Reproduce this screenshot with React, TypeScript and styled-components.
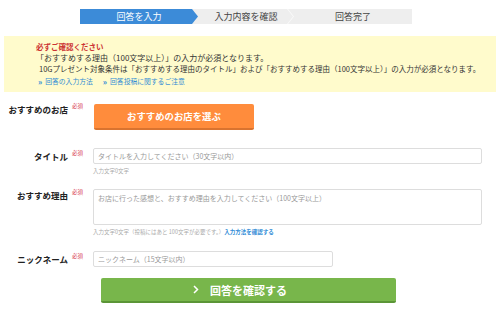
import React from "react";
import styled, { createGlobalStyle } from "styled-components";

const GlobalStyle = createGlobalStyle`
  html, body { margin: 0; padding: 0; background: #fff; }
  body {
    font-family: "Noto Sans CJK JP", "Noto Sans", sans-serif;
    color: #333;
    width: 500px;
    overflow: hidden;
  }
  * { box-sizing: border-box; }
`;

const Page = styled.div`
  width: 500px;
  padding-top: 9px;
`;

const StepBar = styled.div`
  margin-left: 80px;
  width: 332px;
  height: 15px;
  display: flex;
  background: #eeeeee;
`;

const Step = styled.div<{ $w: number; $active?: boolean; $sep?: boolean }>`
  position: relative;
  width: ${(p) => p.$w}px;
  height: 15px;
  display: flex;
  align-items: center;
  justify-content: center;
  font-size: 9px;
  line-height: 15px;
  color: ${(p) => (p.$active ? "#fff" : "#444")};
  background: ${(p) => (p.$active ? "#3c8bd8" : "transparent")};
  clip-path: ${(p) =>
    p.$active
      ? "polygon(0 0, calc(100% - 6px) 0, 100% 50%, calc(100% - 6px) 100%, 0 100%)"
      : "none"};
  &::after {
    content: "";
    display: ${(p) => (p.$sep ? "block" : "none")};
    position: absolute;
    right: 0;
    top: 0;
    width: 7px;
    height: 15px;
    background: #fafafa;
    clip-path: polygon(0 0, 1px 0, 7px 50%, 1px 100%, 0 100%, 6px 50%);
  }
`;

const Notice = styled.div`
  margin: 12px 4px 0;
  height: 56px;
  background: #fffbcc;
  padding: 5px 0 0 32px;
  font-size: 7.5px;
  line-height: 11px;
  color: #333;
`;

const NoticeTitle = styled.div`
  color: #cc3333;
  font-weight: bold;
`;

const NoticeLine = styled.div<{ $indent?: number; $size?: number }>`
  padding-left: ${(p) => p.$indent ?? 0}px;
  font-size: ${(p) => p.$size ?? 7.5}px;
  white-space: nowrap;
`;

const NoticeLinks = styled.div`
  display: flex;
  gap: 10px;
  margin-top: 2px;
  padding-left: 2px;
  font-size: 6.8px;
`;

const NoticeLink = styled.a`
  color: #2f8bd6;
  text-decoration: none;
  display: flex;
  align-items: center;
  &::before {
    content: "»";
    font-size: 8px;
    font-weight: bold;
    margin-right: 3px;
  }
`;

const Form = styled.div`
  padding: 12px 18px 0 0;
  display: flex;
  flex-direction: column;
`;

const Row = styled.div<{ $mt?: number }>`
  display: flex;
  gap: 8px;
  margin-top: ${(p) => p.$mt ?? 0}px;
`;

const LabelCell = styled.div<{ $pt: number }>`
  width: 85px;
  flex: none;
  padding-top: ${(p) => p.$pt}px;
  padding-right: 2px;
  display: flex;
  justify-content: flex-end;
  align-items: flex-start;
`;

const LabelText = styled.span`
  font-size: 8.5px;
  line-height: 10px;
  font-weight: bold;
  color: #222;
  white-space: nowrap;
`;

const Required = styled.span`
  font-size: 5.5px;
  line-height: 6px;
  color: #d6334c;
  margin-left: 4px;
  margin-top: -1px;
  white-space: nowrap;
`;

const Field = styled.div`
  flex: 1;
  display: flex;
  flex-direction: column;
`;

const OrangeButton = styled.button`
  width: 160px;
  height: 26px;
  margin-left: 1px;
  border: none;
  border-bottom: 2px solid #d9732f;
  border-radius: 2px;
  background: #ff8c3c;
  color: #fff;
  font-family: inherit;
  font-weight: bold;
  font-size: 9.4px;
  padding: 0;
  cursor: pointer;
`;

const TextInput = styled.input<{ $w?: number }>`
  width: ${(p) => (p.$w ? `${p.$w}px` : "100%")};
  height: 16px;
  border: 1px solid #dddddd;
  border-radius: 2px;
  padding: 0 4px;
  font-family: inherit;
  font-size: 7px;
  color: #333;
  outline: none;
  &::placeholder { color: #999; }
`;

const TextArea = styled.textarea`
  width: 100%;
  height: 36px;
  border: 1px solid #dddddd;
  border-radius: 2px;
  padding: 3px 4px;
  font-family: inherit;
  font-size: 7px;
  line-height: 10px;
  resize: none;
  outline: none;
  &::placeholder { color: #999; }
`;

const Counter = styled.div`
  margin-top: 3px;
  font-size: 5.5px;
  line-height: 8px;
  color: #aaa;
  white-space: nowrap;
`;

const CounterLink = styled.a`
  color: #2f8bd6;
  font-weight: bold;
  text-decoration: none;
`;

const SubmitWrap = styled.div`
  display: flex;
  margin-top: 11px;
  padding-left: 101px;
`;

const GreenButton = styled.button`
  width: 295px;
  height: 25px;
  border: none;
  border-bottom: 2px solid #5b9537;
  border-radius: 2px;
  background: #78b64b;
  color: #fff;
  font-family: inherit;
  font-weight: bold;
  font-size: 11px;
  display: flex;
  align-items: center;
  justify-content: center;
  gap: 11px;
  padding: 0 17px 0 0;
  cursor: pointer;
`;

const Chevron = () => (
  <svg width="6" height="9" viewBox="0 0 6 9" aria-hidden="true">
    <path d="M1 1 L4.5 4.5 L1 8" stroke="#fff" strokeWidth="1.5" fill="none" />
  </svg>
);

export default function App() {
  return (
    <Page>
      <GlobalStyle />
      <StepBar>
        <Step $w={118} $active>回答を入力</Step>
        <Step $w={96} $sep>入力内容を確認</Step>
        <Step $w={118}>回答完了</Step>
      </StepBar>

      <Notice>
        <NoticeTitle>必ずご確認ください</NoticeTitle>
        <NoticeLine $size={8}>「おすすめする理由（100文字以上）」の入力が必須となります。</NoticeLine>
        <NoticeLine $indent={3}>
          10Gプレゼント対象条件は「おすすめする理由のタイトル」および「おすすめする理由（100文字以上）」の入力が必須となります。
        </NoticeLine>
        <NoticeLinks>
          <NoticeLink href="#">回答の入力方法</NoticeLink>
          <NoticeLink href="#">回答投稿に関するご注意</NoticeLink>
        </NoticeLinks>
      </Notice>

      <Form>
        <Row>
          <LabelCell $pt={0}>
            <LabelText>おすすめのお店</LabelText>
            <Required>必須</Required>
          </LabelCell>
          <Field>
            <OrangeButton type="button">おすすめのお店を選ぶ</OrangeButton>
          </Field>
        </Row>

        <Row $mt={18}>
          <LabelCell $pt={3}>
            <LabelText>タイトル</LabelText>
            <Required>必須</Required>
          </LabelCell>
          <Field>
            <TextInput placeholder="タイトルを入力してください（30文字以内）" />
            <Counter>入力文字0文字</Counter>
          </Field>
        </Row>

        <Row $mt={14}>
          <LabelCell $pt={1}>
            <LabelText>おすすめ理由</LabelText>
            <Required>必須</Required>
          </LabelCell>
          <Field>
            <TextArea placeholder="お店に行った感想と、おすすめ理由を入力してください（100文字以上）" />
            <Counter>
              入力文字0文字（投稿にはあと 100文字が必要です。）<CounterLink href="#">入力方法を確認する</CounterLink>
            </Counter>
          </Field>
        </Row>

        <Row $mt={15}>
          <LabelCell $pt={3}>
            <LabelText>ニックネーム</LabelText>
            <Required>必須</Required>
          </LabelCell>
          <Field>
            <TextInput $w={240} placeholder="ニックネーム（15文字以内）" />
          </Field>
        </Row>

        <SubmitWrap>
          <GreenButton type="button">
            <Chevron />
            <span>回答を確認する</span>
          </GreenButton>
        </SubmitWrap>
      </Form>
    </Page>
  );
}
